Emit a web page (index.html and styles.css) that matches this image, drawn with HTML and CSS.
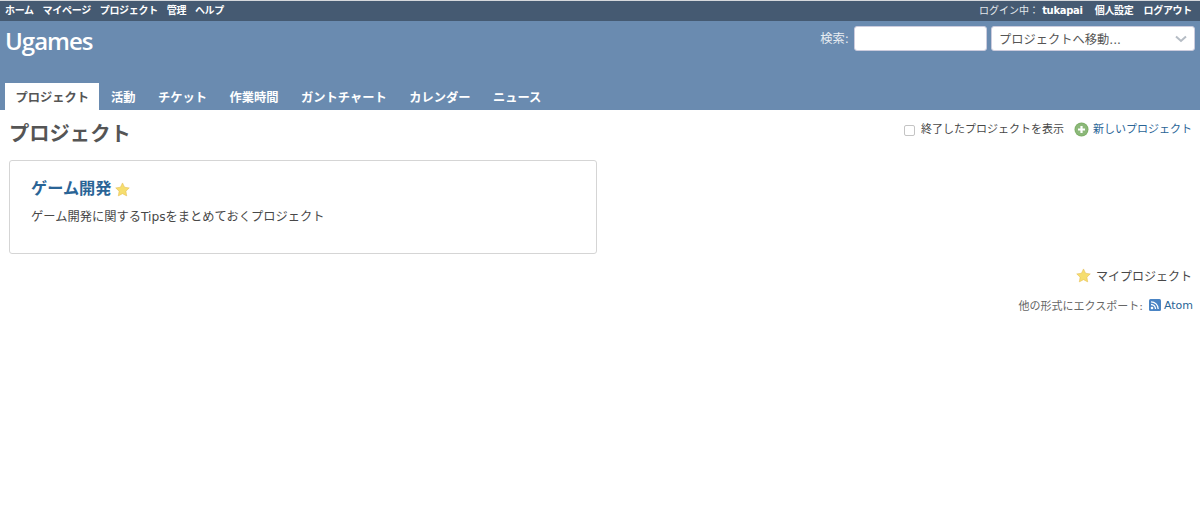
FILE: index.html
```html
<!DOCTYPE html>
<html lang="ja">
<head>
<meta charset="utf-8">
<title>プロジェクト - Ugames</title>
<link rel="stylesheet" href="styles.css">
</head>
<body>
<div class="top-menu">
  <ul class="top-links">
    <li><a href="#">ホーム</a></li>
    <li><a href="#">マイページ</a></li>
    <li><a href="#">プロジェクト</a></li>
    <li><a href="#">管理</a></li>
    <li><a href="#">ヘルプ</a></li>
  </ul>
  <ul class="top-links account">
    <li class="login">ログイン中： <a href="#" class="user">tukapai</a></li>
    <li><a href="#">個人設定</a></li>
    <li><a href="#">ログアウト</a></li>
  </ul>
</div>
<header class="header">
  <div class="header-row">
    <h1 class="site-title">Ugames</h1>
    <div class="quick">
      <label class="search-label">検索:</label>
      <input class="search-input" type="text">
      <div class="jump">
        <span>プロジェクトへ移動...</span>
        <svg class="chev" width="14" height="8" viewBox="0 0 14 8"><path d="M2 1.5 7 6l5-4.500" fill="none" stroke="#b5bcc4" stroke-width="2"/></svg>
      </div>
    </div>
  </div>
  <nav class="tabs">
    <a href="#" class="tab selected">プロジェクト</a>
    <a href="#" class="tab">活動</a>
    <a href="#" class="tab">チケット</a>
    <a href="#" class="tab">作業時間</a>
    <a href="#" class="tab">ガントチャート</a>
    <a href="#" class="tab">カレンダー</a>
    <a href="#" class="tab">ニュース</a>
  </nav>
</header>
<main class="content">
  <div class="title-row">
    <h2 class="page-title">プロジェクト</h2>
    <div class="actions">
      <label class="closed"><span class="checkbox"></span>終了したプロジェクトを表示</label>
      <a href="#" class="new-project">
        <svg width="15" height="15" viewBox="0 0 15 15"><circle cx="7.500" cy="7.500" r="7" fill="#7fb069"/><circle cx="7.500" cy="7.500" r="6" fill="#8cb87a"/><path d="M7.500 4v7M4 7.500h7" stroke="#fff" stroke-width="2.200"/></svg>
        新しいプロジェクト
      </a>
    </div>
  </div>
  <section class="card">
    <h3 class="card-title"><a href="#">ゲーム開発</a>
      <svg class="star" width="15" height="15" viewBox="0 0 16 16"><path d="M8 1l2.200 4.600 5 .7-3.600 3.500.9 5L8 12.400l-4.500 2.400.9-5L.8 6.300l5-.7z" fill="#f6de6e" stroke="#e6bf55" stroke-width=".6"/></svg>
    </h3>
    <p class="card-desc">ゲーム開発に関するTipsをまとめておくプロジェクト</p>
  </section>
  <div class="my-projects">
    <svg width="15" height="15" viewBox="0 0 16 16"><path d="M8 1l2.200 4.600 5 .7-3.600 3.500.9 5L8 12.400l-4.500 2.400.9-5L.8 6.300l5-.7z" fill="#f6de6e" stroke="#e6bf55" stroke-width=".6"/></svg>
    <span>マイプロジェクト</span>
  </div>
  <div class="export">
    <span>他の形式にエクスポート:</span>
    <a href="#" class="atom">
      <svg width="12" height="12" viewBox="0 0 12 12"><rect width="12" height="12" rx="1.500" fill="#4a84c4"/><circle cx="3" cy="9" r="1.300" fill="#fff"/><path d="M2 5.500a4.500 4.500 0 0 1 4.500 4.500M2 2.800a7.200 7.200 0 0 1 7.200 7.200" fill="none" stroke="#fff" stroke-width="1.300"/></svg>
      Atom
    </a>
  </div>
</main>
</body>
</html>
```
FILE: styles.css
```css
* { box-sizing: border-box; }
html, body { margin: 0; padding: 0; }
body {
  background: #fff;
  color: #484848;
  font-family: "DejaVu Sans", "Noto Sans CJK JP", sans-serif;
  font-size: 12.250px;
  height: 520px;
  overflow: hidden;
}
a { text-decoration: none; color: #2a6496; }
ul { list-style: none; margin: 0; padding: 0; }

.top-menu {
  display: flex;
  justify-content: space-between;
  align-items: center;
  height: 21px;
  border-top: 1px solid #d5d8dc;
  background: #455a72;
  padding: 0 8px 4px 5px;
  font-size: 10px;
  font-weight: bold;
  color: #fff;
}
.top-links { display: flex; gap: 8.800px; letter-spacing: -0.3px; }
.top-links a { color: #fff; }
.account { gap: 10px; }
.login { font-weight: normal; color: #e2e7ec; margin-right: 2px; letter-spacing: 0; }
.login .user { font-weight: bold; letter-spacing: -0.3px; }

.header {
  background: #6a8bb0;
  height: 89px;
  display: flex;
  flex-direction: column;
  justify-content: space-between;
  padding: 0 5px;
}
.header-row { display: flex; justify-content: space-between; padding-top: 5px; }
.site-title {
  margin: -1px 0 0;
  font-family: "Open Sans", sans-serif;
  font-size: 24px;
  line-height: 32px;
  font-weight: 600;
  letter-spacing: -1px;
  color: #fff;
}
.quick { display: flex; align-items: center; height: 25px; }
.search-label { color: #e8edf2; padding-bottom: 2px; margin-right: 5px; }
.search-input {
  width: 133px;
  height: 25px;
  border: 1px solid #ccd;
  border-radius: 3px;
  background: #fff;
  margin-right: 4px;
}
.jump {
  width: 204px;
  height: 25px;
  background: #fff;
  border-radius: 3px;
  border: 1px solid #ccd;
  display: flex;
  justify-content: space-between;
  align-items: center;
  padding: 1px 6px 0 7px;
  color: #555;
}
.tabs { display: flex; align-items: flex-end; height: 27px; }
.tab {
  height: 27px;
  line-height: 31px;
  padding: 0 11px;
  font-weight: bold;
  color: #fff;
  margin-right: 0.500px;
}
.tab.selected { background: #fff; color: #555; width: 94px; padding: 0 0 0 10.500px; margin-right: 1px; }

.content { padding: 0 8px 0 9px; }
.title-row { display: flex; justify-content: space-between; align-items: flex-start; height: 50px; }
.page-title {
  margin: 9px 0 0;
  font-size: 20.300px;
  line-height: 30px;
  font-weight: bold;
  color: #555;
}
.actions { display: flex; align-items: center; gap: 10px; padding-top: 12px; font-size: 11px; line-height: 16px; }
.closed { display: flex; align-items: center; color: #484848; }
.checkbox {
  width: 11px; height: 11px;
  border: 1px solid #c4c4c4;
  border-radius: 2px;
  background: #fff;
  margin-right: 6px;
}
.new-project { display: flex; align-items: center; gap: 4px; }
.new-project svg { margin-top: -2px; }

.card {
  width: 588px;
  height: 94px;
  border: 1px solid #d5d5d5;
  border-radius: 3px;
  padding: 16px 21px 0;
}
.card-title {
  margin: 0;
  display: flex;
  align-items: center;
  gap: 4px;
  font-size: 16.200px;
  line-height: 24px;
  font-weight: bold;
}
.card-desc { margin: 7px 0 0; line-height: 18px; }

.my-projects {
  display: flex;
  justify-content: flex-end;
  align-items: center;
  gap: 5px;
  margin-top: 12px;
  height: 18px;
  font-size: 12px;
}
.export {
  display: flex;
  justify-content: flex-end;
  align-items: center;
  gap: 6px;
  margin: 13px -1px 0 0;
  height: 16px;
  font-size: 11px;
  color: #666;
}
.atom { display: flex; align-items: center; gap: 3px; font-size: 11px; }
```
